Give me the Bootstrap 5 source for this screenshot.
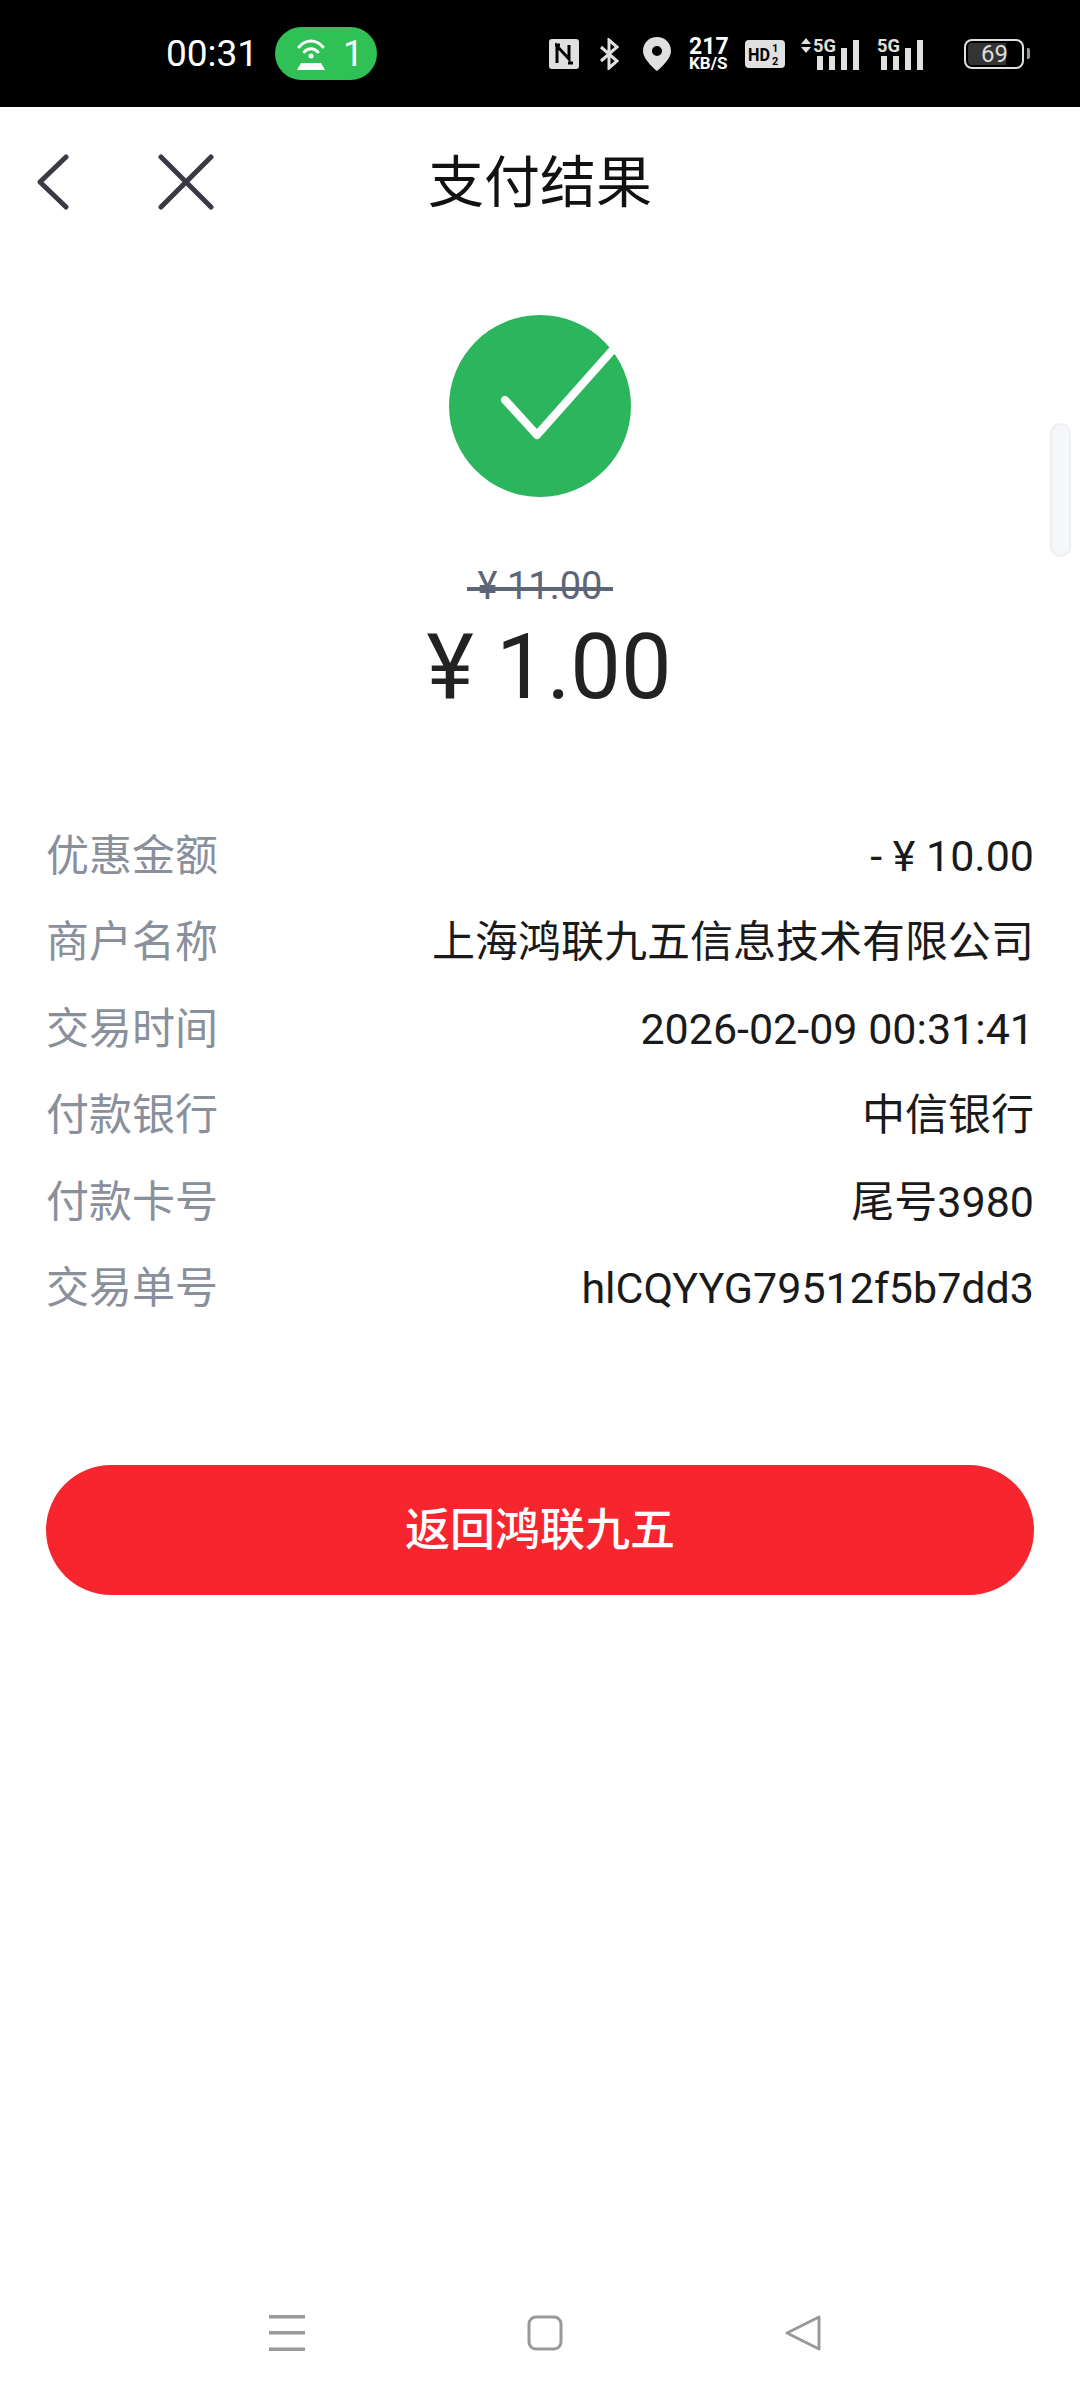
<!DOCTYPE html>
<html lang="zh-CN">

<head>
    <meta charset="UTF-8">
    <meta name="viewport" content="width=device-width, initial-scale=1.0">
    <title>支付结果</title>
    <link href="https://cdn.jsdelivr.net/npm/bootstrap@5.3.3/dist/css/bootstrap.min.css" rel="stylesheet" />
    <style>
        body { font-family: Roboto, "Noto Sans CJK SC", sans-serif; background: #fff; }
        .page-wrap { height: 2400px; overflow: hidden; }
        .status-bar { height: 107px; background: #000; color: #fff; padding-left: 166px; }
        .status-time { font-size: 37px; line-height: 1; width: 109px; }
        .wifi-pill { width: 102px; height: 53px; background: #2fc155; border-radius: 27px; font-size: 36px; line-height: 1; padding-left: 21px; gap: 17px; }
        .status-icons { margin-left: 172px; color: #e0e0e0; }
        .speed-box { width: 38px; margin: 0 18px; color: #fff; font-weight: 700; text-align: center; line-height: 1; }
        .speed-box div:first-child { font-size: 23px; height: 20px; }
        .speed-box div:last-child { font-size: 17px; white-space: nowrap; }
        .batt-box { position: relative; width: 60px; height: 30px; margin-left: 41px; border: 2px solid #e0e0e0; border-radius: 8px; }
        .batt-fill { width: 38px; height: 22px; margin: 2px; background: #333; border-radius: 4px 0 0 4px; }
        .batt-num { position: absolute; left: 15px; top: 0; font-size: 24px; line-height: 26px; color: #ddd; }
        .batt-nub { width: 3px; height: 11px; margin-left: 3px; background: #999; border-radius: 0 2px 2px 0; }
        .top-bar { height: 150px; }
        .top-side { flex: 1 1 0; padding-left: 37px; gap: 89px; }
        .top-title { font-size: 56px; line-height: 1; color: #111; padding-top: 2px; }
        .check-wrap { padding-top: 58px; }
        .old-price { margin-top: 66px; font-size: 38px; line-height: 46px; color: #5d6579; }
        .old-price span { position: relative; padding: 0 11px; }
        .old-price span::after { content: ""; position: absolute; left: 0; right: 0; top: 23px; height: 4px; background: #5d6579; }
        .pay-amount { margin-top: 6px; padding-left: 18px; font-size: 90px; line-height: 106px; color: #222; }
        .info-list { margin-top: 92px; padding: 0 46px; }
        .info-row { height: 86.4px; font-size: 43px; }
        .info-label { color: #8a8f9c; }
        .info-value { color: #1a1a1a; }
        .return-btn { display: block; width: 988px; height: 130px; margin: 134px auto 0; background: #f7252d; border: 0; border-radius: 65px; color: #fff; font-size: 45px; font-weight: 500; }
        .side-scroll { position: absolute; left: 1050px; top: 423px; width: 21px; height: 134px; background: #f6f7fb; border: 2px solid #eeeff2; border-radius: 11px; }
        .nav-bottom { height: 134px; gap: 222px; padding-left: 9px; }
    </style>
</head>

<body>
    <div class="page-wrap d-flex flex-column position-relative">
        <!-- status bar -->
        <div class="status-bar d-flex align-items-center">
            <div class="status-time">00:31</div>
            <div class="wifi-pill d-flex align-items-center">
                <svg width="30" height="32" viewBox="0 0 30 32" fill="none" stroke="#fff" stroke-width="3" stroke-linecap="round">
                    <path d="M3 9C10 1 20 1 27 9" />
                    <path d="M8 14C12 9.500 18 9.500 22 14" />
                    <circle cx="15" cy="18" r="2.500" fill="#fff" stroke="none" />
                    <path d="M5 25H25L29 32H1Z" fill="#fff" stroke="none" />
                </svg>
                <span>1</span>
            </div>
            <div class="status-icons d-flex align-items-center">
                <svg class="me-3" width="30" height="30" viewBox="0 0 30 30">
                    <rect width="30" height="30" rx="3" fill="#e0e0e0" />
                    <path d="M8 24V7L20 20V6" fill="none" stroke="#000" stroke-width="3" />
                    <path d="M6 6H11M19 24H24" stroke="#000" stroke-width="3" />
                </svg>
                <svg class="ms-1" width="20" height="32" viewBox="0 0 20 32" fill="none" stroke="#e0e0e0" stroke-width="3">
                    <path d="M2 9L18 23L10 30V2L18 9L2 23" />
                </svg>
                <svg class="ms-4" width="28" height="34" viewBox="0 0 28 34">
                    <path fill-rule="evenodd" fill="#e0e0e0" d="M14 0C6 0 0 6 0 14C0 23 14 34 14 34C14 34 28 23 28 14C28 6 22 0 14 0ZM14 9A5 5 0 1 1 14 19A5 5 0 1 1 14 9Z" />
                </svg>
                <div class="speed-box">
                    <div>217</div>
                    <div>KB/S</div>
                </div>
                <svg width="40" height="28" viewBox="0 0 40 28">
                    <rect width="40" height="28" rx="4" fill="#e0e0e0" />
                    <text x="3" y="21" font-family="Roboto" font-weight="700" font-size="19" fill="#000" textLength="22" lengthAdjust="spacingAndGlyphs">HD</text>
                    <text x="27" y="12" font-family="Roboto" font-weight="700" font-size="11" fill="#000">1</text>
                    <text x="27" y="25" font-family="Roboto" font-weight="700" font-size="11" fill="#000">2</text>
                </svg>
                <svg class="sig-icon ms-3" width="60" height="32" viewBox="0 0 60 32" fill="#e0e0e0">
                    <path d="M0 6L5 0L10 6ZM0 9H10L5 15Z" />
                    <text x="12" y="14" font-family="Roboto" font-weight="700" font-size="19" textLength="23" lengthAdjust="spacingAndGlyphs">5G</text>
                    <rect x="16" y="18" width="6" height="14" />
                    <rect x="28" y="18" width="6" height="14" />
                    <rect x="40" y="10" width="6" height="22" />
                    <rect x="52" y="2" width="6" height="30" />
                </svg>
                <svg class="ms-3" width="46" height="32" viewBox="0 0 46 32" fill="#e0e0e0">
                    <text x="0" y="14" font-family="Roboto" font-weight="700" font-size="19" textLength="23" lengthAdjust="spacingAndGlyphs">5G</text>
                    <rect x="4" y="18" width="6" height="14" />
                    <rect x="16" y="18" width="6" height="14" />
                    <rect x="28" y="10" width="6" height="22" />
                    <rect x="40" y="2" width="6" height="30" />
                </svg>
                <div class="batt-box">
                    <div class="batt-fill"></div>
                    <span class="batt-num">69</span>
                </div>
                <div class="batt-nub"></div>
            </div>
        </div>

        <!-- title row -->
        <div class="top-bar d-flex align-items-center">
            <div class="top-side d-flex align-items-center">
                <svg width="32" height="56" viewBox="0 0 32 56" fill="none" stroke="#3a3a44" stroke-width="5" stroke-linecap="round" stroke-linejoin="round">
                    <path d="M29 3L3 28L29 53" />
                </svg>
                <svg width="56" height="56" viewBox="0 0 56 56" fill="none" stroke="#3a3a44" stroke-width="5" stroke-linecap="round">
                    <path d="M3 3L53 53M53 3L3 53" />
                </svg>
            </div>
            <div class="top-title">支付结果</div>
            <div class="top-side"></div>
        </div>

        <!-- result -->
        <div class="check-wrap text-center">
            <svg class="d-block mx-auto" width="182" height="182" viewBox="0 0 182 182">
                <circle cx="91" cy="91" r="91" fill="#2bb55c" />
                <path d="M56 85L88 120L168 30" fill="none" stroke="#fff" stroke-width="8" stroke-linecap="round" stroke-linejoin="round" />
            </svg>
            <div class="old-price"><span>¥ 11.00</span></div>
            <div class="pay-amount">¥ 1.00</div>
        </div>

        <div class="info-list">
            <div class="info-row d-flex justify-content-between align-items-center"><span class="info-label">优惠金额</span><span class="info-value">- ¥ 10.00</span></div>
            <div class="info-row d-flex justify-content-between align-items-center"><span class="info-label">商户名称</span><span class="info-value">上海鸿联九五信息技术有限公司</span></div>
            <div class="info-row d-flex justify-content-between align-items-center"><span class="info-label">交易时间</span><span class="info-value">2026-02-09 00:31:41</span></div>
            <div class="info-row d-flex justify-content-between align-items-center"><span class="info-label">付款银行</span><span class="info-value">中信银行</span></div>
            <div class="info-row d-flex justify-content-between align-items-center"><span class="info-label">付款卡号</span><span class="info-value">尾号3980</span></div>
            <div class="info-row d-flex justify-content-between align-items-center"><span class="info-label">交易单号</span><span class="info-value">hlCQYYG79512f5b7dd3</span></div>
        </div>

        <button type="button" class="btn return-btn">返回鸿联九五</button>

        <div class="side-scroll"></div>

        <!-- system nav -->
        <div class="nav-bottom d-flex justify-content-center align-items-center mt-auto">
            <svg width="36" height="36" viewBox="0 0 36 36" fill="#999">
                <rect y="0" width="36" height="3.500" />
                <rect y="16" width="36" height="3.500" />
                <rect y="32.500" width="36" height="3.500" />
            </svg>
            <svg width="36" height="36" viewBox="0 0 36 36" fill="none" stroke="#999" stroke-width="3">
                <rect x="2" y="2" width="32" height="32" rx="7" />
            </svg>
            <svg width="36" height="36" viewBox="0 0 36 36" fill="none" stroke="#999" stroke-width="3" stroke-linejoin="round">
                <path d="M2 18L34 2V34Z" />
            </svg>
        </div>
    </div>

    <script src="https://cdn.jsdelivr.net/npm/bootstrap@5.3.3/dist/js/bootstrap.bundle.min.js"></script>
</body>

</html>
